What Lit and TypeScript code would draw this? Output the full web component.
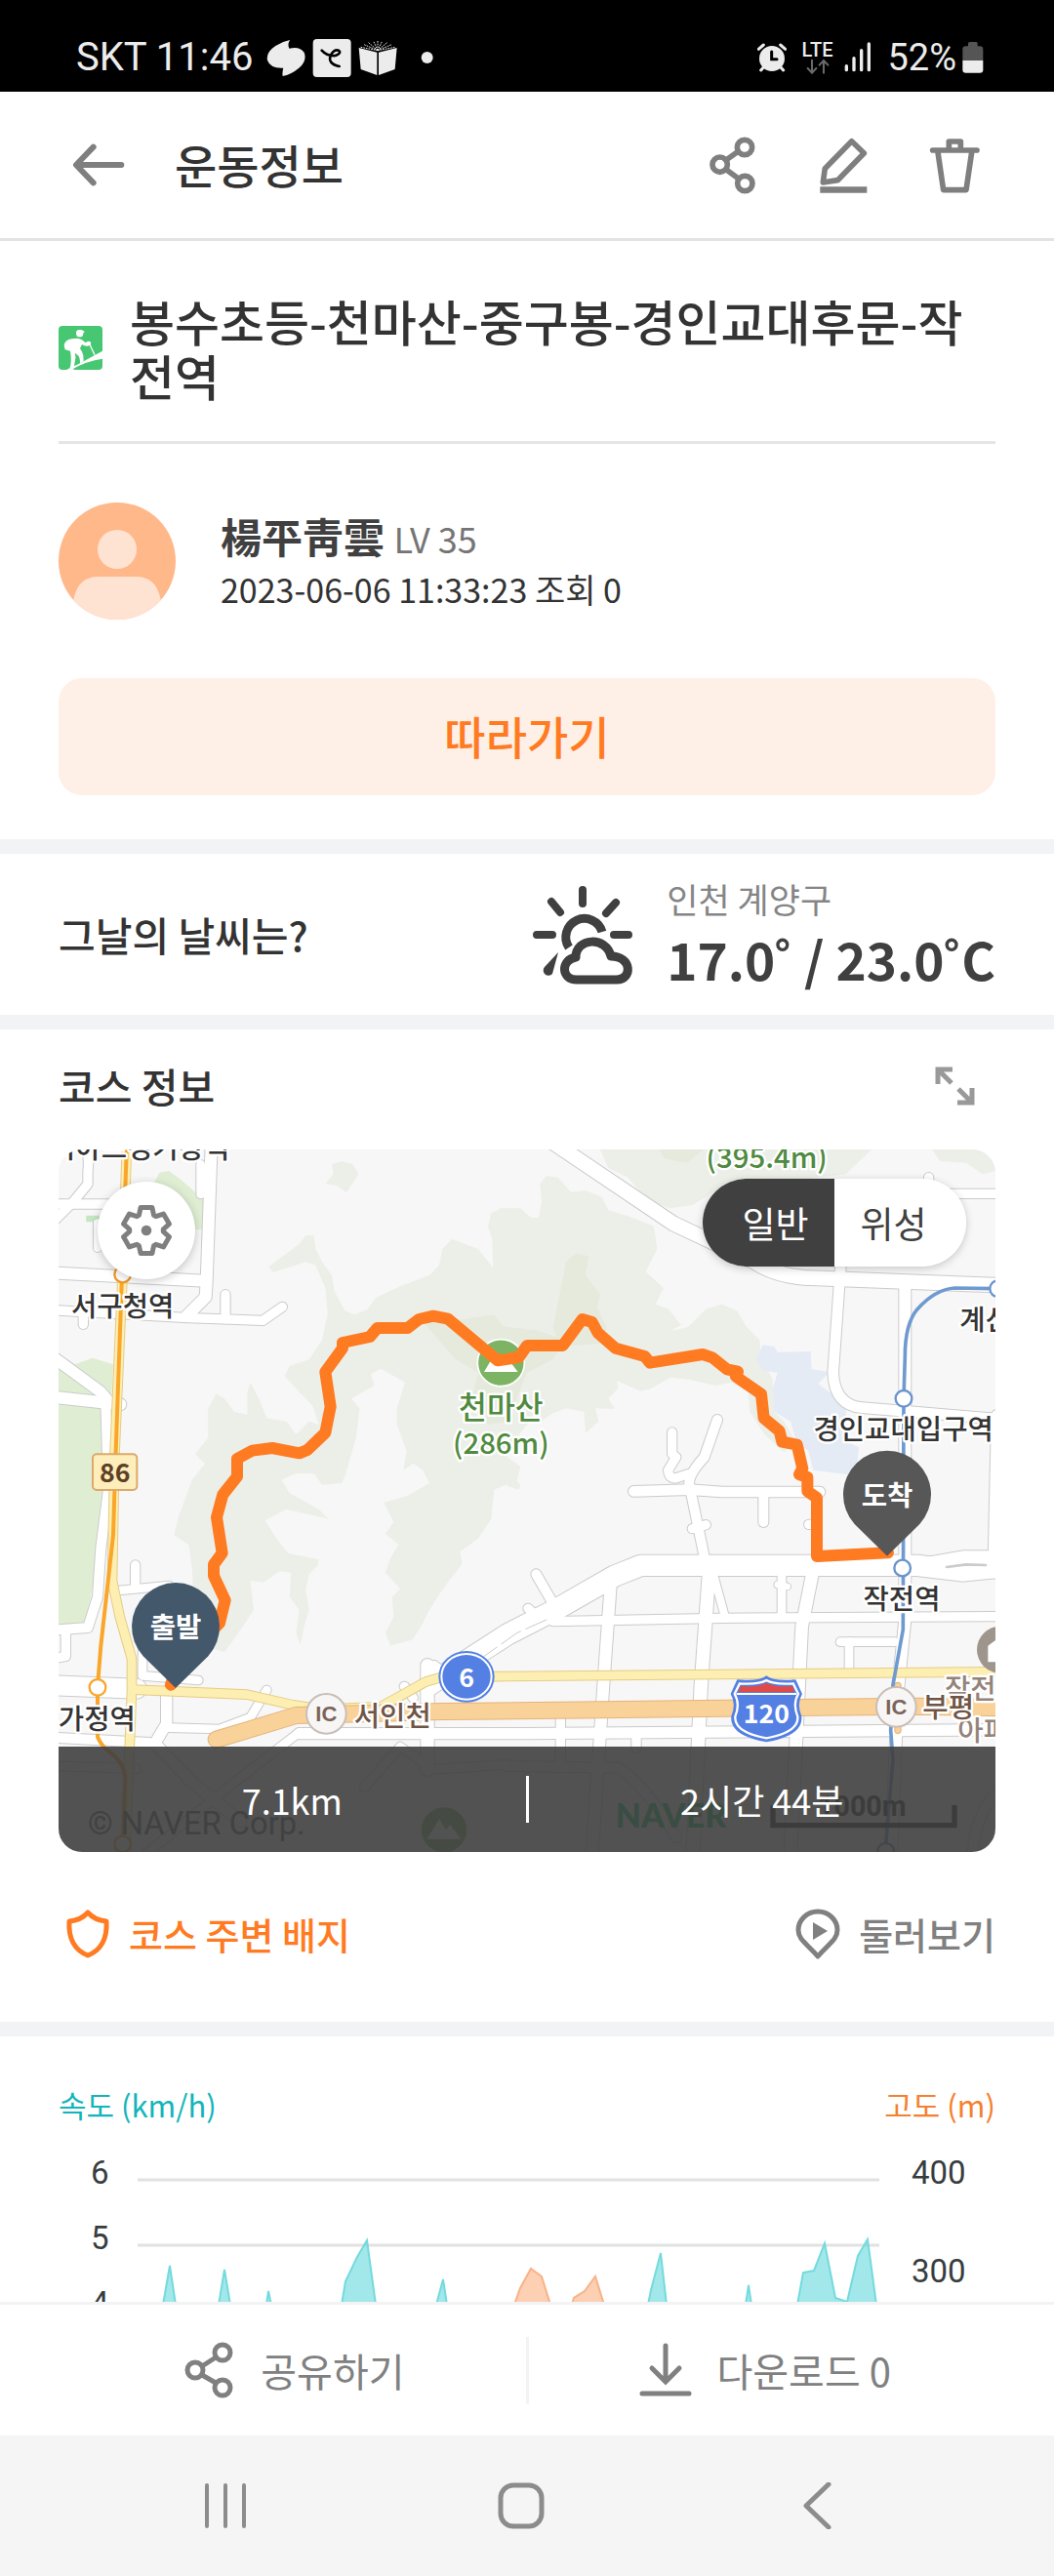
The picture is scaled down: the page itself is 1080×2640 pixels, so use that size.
import { LitElement, html, svg, css } from "lit";
import { customElement, property, state } from "lit/decorators.js";
import { classMap } from "lit/directives/class-map.js";

/* ---------- shared icon drawings ---------- */

const gearPath = (() => {
  const pts: string[] = [];
  const at = (deg: number, r: number) => {
    const a = ((deg - 90) * Math.PI) / 180;
    pts.push(`${(r * Math.cos(a)).toFixed(1)} ${(r * Math.sin(a)).toFixed(1)}`);
  };
  for (let k = 0; k < 6; k++) {
    const d = k * 60;
    at(d - 26, 52);
    at(d - 14, 73);
    at(d + 14, 73);
    at(d + 26, 52);
  }
  return `M${pts.join("L")}Z`;
})();

const icons: Record<string, { box: string; body: unknown }> = {
  back: {
    box: "34 357 180 180",
    body: svg`<g fill="none" stroke="#7f7f7f" stroke-width="18" stroke-linecap="round" stroke-linejoin="round"><path d="M194 447H56M108 392L55 447L108 502"/></g>`,
  },
  share: {
    box: "63 357 171 180",
    body: svg`<g fill="none" stroke="#7f7f7f" stroke-width="17"><circle cx="186" cy="393" r="23"/><circle cx="110" cy="446" r="23"/><circle cx="187" cy="504" r="23"/><path d="M129 432L167 405M129 461L168 490"/></g>`,
  },
  edit: {
    box: "407 357 171 180",
    body: svg`<path d="M517 374L555 411L474 494L429 501L435 458Z" fill="none" stroke="#7f7f7f" stroke-width="17" stroke-linejoin="round"/><path d="M420 514h144v19h-144z" fill="#7f7f7f"/>`,
  },
  trash: {
    box: "749 357 171 180",
    body: svg`<g fill="none" stroke="#7f7f7f" stroke-width="17" stroke-linecap="round" stroke-linejoin="round"><path d="M766 402H902M816 398V375H852V398M782 408L799 524H869L886 408"/></g>`,
  },
  weather: {
    box: "545 906 104 104",
    body: svg`<g fill="none" stroke="#404040" stroke-linecap="round" stroke-linejoin="round"><path stroke-width="8" d="M597 912V926M565 924L574 935M631 925L621 936M550 958H566M629 958H644"/><path stroke-width="9" stroke-linecap="butt" d="M583 971A19 19 0 1 1 617 955"/><path stroke-width="9" d="M591 1004C575 1004 574 984 590 981C590 961 621 959 626 980C648 980 648 1004 632 1004Z"/></g><path fill="#404040" d="M572 976L558 991A5 5 0 0 0 566 998Z"/>`,
  },
  expand: {
    box: "957 1090 44 44",
    body: svg`<g fill="none" stroke="#999" stroke-width="5"><path d="M961 1110V1095H976M962 1096L975 1109M996 1114V1129H981M995 1128L982 1115"/></g>`,
  },
  gear: {
    box: "-81 -81 162 162",
    body: svg`<path d="${gearPath}" fill="none" stroke="#7f7f7f" stroke-width="15" stroke-linejoin="round"/><circle r="16" fill="#7f7f7f"/>`,
  },
  shield: {
    box: "66 1955 48 54",
    body: svg`<path d="M90 1960Q97 1968 109 1969C110 1986 105 1998 90 2004C75 1998 70 1986 71 1969Q83 1968 90 1960Z" fill="none" stroke="#ff7b22" stroke-width="5" stroke-linejoin="round"/>`,
  },
  place: {
    box: "815 1955 48 54",
    body: svg`<path d="M839 2005C828 1992 819 1988 819 1978A20 19 0 0 1 859 1978C859 1988 850 1992 839 2005Z" fill="none" stroke="#808080" stroke-width="5" stroke-linejoin="round"/><path d="M834 1970L849 1979L834 1988Z" fill="#808080"/>`,
  },
  shareThin: {
    box: "188 2399 54 60",
    body: svg`<g fill="none" stroke="#808080" stroke-width="5"><circle cx="229" cy="2411" r="8"/><circle cx="201" cy="2429" r="8"/><circle cx="229" cy="2447" r="8"/><path d="M208 2425L222 2416M208 2434L222 2442"/></g>`,
  },
  download: {
    box: "655 2400 54 60",
    body: svg`<g fill="none" stroke="#808080" stroke-width="5" stroke-linecap="round"><path d="M682 2405V2441M668 2428L682 2442L696 2428M658 2454H706"/></g>`,
  },
  recents: {
    box: "208 2543 48 48",
    body: svg`<path d="M213 2546V2588M232 2546V2588M251 2546V2588" stroke="#8c8c8c" stroke-width="4" stroke-linecap="round"/>`,
  },
  home: {
    box: "510 2543 48 48",
    body: svg`<rect x="513" y="2546" width="42" height="42" rx="13" fill="none" stroke="#8c8c8c" stroke-width="5"/>`,
  },
  prev: {
    box: "813 2543 48 48",
    body: svg`<path d="M849 2545L826 2567L849 2589" fill="none" stroke="#8c8c8c" stroke-width="5" stroke-linecap="round" stroke-linejoin="round"/>`,
  },
  hiking: {
    box: "0 945 135 135",
    body: svg`<rect y="945" width="135" height="135" rx="12" fill="#47c771"/><g fill="#fff"><circle cx="65" cy="968" r="11"/><path d="M53 962Q66 952 80 962L78 966Z"/><path d="M17 1006Q19 988 40 985Q62 980 72 988L82 996L92 992Q101 992 99 1001L94 1006Q82 1009 72 1002L66 1014Q74 1026 76 1036L77 1054L66 1060Q66 1042 60 1036L50 1028Q54 1040 51 1050L46 1080H33Q42 1056 36 1022L20 1018Z"/><path d="M24 1080L66 1060L135 1022V1046Q88 1052 38 1080Z"/></g><path d="M94 998L111 1034" stroke="#fff" stroke-width="4"/>`,
  },
  avatar: {
    box: "0 0 120 120",
    body: svg`<clipPath id="c"><circle cx="60" cy="60" r="60"/></clipPath><g clip-path="url(#c)"><rect width="120" height="120" fill="#ffb88a"/><circle cx="60" cy="48" r="20" fill="#ffe3d2"/><path d="M14 140V110Q16 76 40 76H80Q104 76 106 110V140Z" fill="#ffe3d2"/></g>`,
  },
  notices: {
    box: "640 60 519 120",
    body: svg`<path fill="#ececec" d="M712 66Q704 80 710 92Q742 84 756 104Q766 130 740 152Q716 172 690 177Q688 164 692 152Q652 154 643 128Q638 104 668 84Q690 70 712 66Z"/><rect x="783" y="63" width="117" height="117" rx="12" fill="#ececec"/><path d="M810 98Q826 116 852 114Q872 106 862 98Q848 94 838 112Q826 138 864 147" fill="none" stroke="#000" stroke-width="8" stroke-linecap="round"/><g fill="#ececec"><path d="M924 90L980 104V174L930 156ZM1041 90L985 104V174L1035 156Z"/></g><path d="M982 98L930 88M982 98L940 80M982 98L954 74M982 98L969 69M982 98V66M982 98L996 69M982 98L1011 74M982 98L1025 80M982 98L1036 88" stroke="#ececec" stroke-width="3" stroke-dasharray="5 3"/><circle cx="1134" cy="120" r="18" fill="#ececec"/>`,
  },
  alarm: {
    box: "224 72 90 96",
    body: svg`<circle cx="269" cy="123" r="39" fill="#ececec"/><path d="M228 94L243 81M310 94L295 81M243 150L235 159M296 150L304 159" stroke="#ececec" stroke-width="9" stroke-linecap="round"/><path d="M268 102V125H284" fill="none" stroke="#000" stroke-width="9" stroke-linecap="round"/>`,
  },
  traffic: {
    box: "372 122 78 48",
    body: svg`<path d="M393 127V164M380 152L393 166L406 152M429 166V130M416 142L429 128L442 142" fill="none" stroke="#6a6a6a" stroke-width="6" stroke-linecap="round"/>`,
  },
  signal: {
    box: "497 72 84 96",
    body: svg`<path d="M504 146V158M527 122V158M550 98V158M573 78V158" stroke="#ececec" stroke-width="10" stroke-linecap="round"/>`,
  },
  battery: {
    box: "857 69 66 96",
    body: svg`<path d="M858 126V92Q858 82 868 82H875V74Q875 69 880 69H900Q904 69 904 74V82H911Q921 82 921 92V126Z" fill="#555"/><path d="M858 126H921V155Q921 164 911 164H868Q858 164 858 155Z" fill="#ececec"/>`,
  },
};

@customElement("app-icon")
export class AppIcon extends LitElement {
  @property() name = "";

  static styles = css`
    :host {
      display: block;
      flex: none;
    }
    svg {
      display: block;
      width: 100%;
      height: 100%;
    }
  `;

  render() {
    const icon = icons[this.name];
    return html`<svg viewBox=${icon.box} aria-hidden="true">${icon.body}</svg>`;
  }
}

/* ---------- map ---------- */

interface Street {
  d: string;
  w: number;
}

const streets: Street[] = [
  { d: "M40 222H240", w: 28 },
  { d: "M145 40Q155 90 150 120V160L105 215L50 270", w: 28 },
  { d: "M530 40L515 460L512 508L455 565", w: 36 },
  { d: "M497 100V192", w: 26 },
  { d: "M180 280V357", w: 24 },
  { d: "M40 433L510 458", w: 36 },
  { d: "M40 548L460 572L688 580L748 538", w: 28 },
  { d: "M573 500V575", w: 28 },
  { d: "M136 560V592", w: 28 },
  { d: "M40 690L190 800L215 830", w: 34 },
  { d: "M40 815L250 838", w: 36 },
  { d: "M205 830L213 1100L190 1280L180 1430L150 1524L40 1532", w: 30 },
  { d: "M245 1410L400 1395", w: 26 },
  { d: "M296 1332V1400", w: 28 },
  { d: "M82 1530V1612L40 1620", w: 28 },
  { d: "M40 1702L300 1712", w: 60 },
  { d: "M318 1600V1672L490 1686", w: 26 },
  { d: "M392 1720V1820L356 1880L470 2000L620 2120", w: 34 },
  { d: "M40 1862L340 1878", w: 30 },
  { d: "M400 1832L555 1836L650 1800L700 1716", w: 26 },
  { d: "M330 2220L600 2000L800 1846H1230", w: 26 },
  { d: "M70 1950L300 1958", w: 26 },
  { d: "M1000 2015L1110 1890L1210 1960L1440 1945", w: 26 },
  { d: "M1194 1640V1960", w: 40 },
  { d: "M1123 1705L1150 1740", w: 28 },
  { d: "M1215 1640L1240 1660", w: 28 },
  { d: "M1200 1700L1440 1545L1590 1468L1770 1365L1850 1333H2700L2840 1350L2940 1340", w: 64 },
  { d: "M2700 1330L2840 1305H2950", w: 34 },
  { d: "M1503 1465L1520 1480", w: 28 },
  { d: "M1528 1360L1580 1450", w: 30 },
  { d: "M1580 1505L2100 1495L2950 1490", w: 28 },
  { d: "M1758 1380L1735 1700L1700 2220", w: 36 },
  { d: "M2060 1350L2035 1700L2010 2220", w: 40 },
  { d: "M2380 1345L2345 1520L2310 2220", w: 38 },
  { d: "M2283 1360V1490", w: 26 },
  { d: "M2073 1360L2110 1496", w: 24 },
  { d: "M2270 1392L2300 1398", w: 20 },
  { d: "M2463 1568H2630", w: 26 },
  { d: "M2490 1568V1660", w: 26 },
  { d: "M800 1850H1500L2950 1838", w: 34 },
  { d: "M1603 1800V1940", w: 28 },
  { d: "M1836 1850V1895", w: 28 },
  { d: "M1440 1950L1780 1955Q1850 1990 1960 2170", w: 30 },
  { d: "M2870 2220Q2880 2080 2960 2020", w: 30 },
  { d: "M2662 470V1500L2640 1720L2620 2220", w: 36 },
  { d: "M1570 26L1950 282L2200 400Q2260 440 2350 448L2960 472", w: 44 },
  { d: "M2465 400L2441 740Q2445 840 2530 848L2960 884", w: 32 },
  { d: "M2735 140V190H2960", w: 28 },
  { d: "M2942 870L2932 1320", w: 28 },
  { d: "M1946 924V990L1958 1000L1934 1040Q1936 1068 1960 1064L1996 1052", w: 28 },
  { d: "M2085 885L2045 1000Q1990 1060 2000 1090L2050 1330", w: 30 },
  { d: "M1828 1105L2000 1100L2100 1107L2400 1107", w: 32 },
  { d: "M2227 1110V1200", w: 30 },
  { d: "M2008 1220L2050 1208", w: 28 },
  { d: "M2366 1207H2380", w: 28 },
];

const route =
  "M405 1700L420 1650L555 1510L572 1440L537 1365V1330L563 1295L546 1185L565 1115L609 1060V1005L655 980L717 972L800 988L825 978L880 925L896 845L880 738L933 665V648L1017 630L1040 603H1133L1168 576L1212 566L1257 575L1410 703L1475 693L1500 657H1610L1670 576L1700 585L1718 618L1772 665L1862 690L1878 710L2040 684L2070 694L2115 730L2148 737L2142 752L2220 806L2228 880L2276 920L2284 953L2330 962L2347 1035L2337 1053L2362 1062V1105L2391 1125V1305L2610 1294";

const woods = [
  "M880 160L905 130L900 100L930 90L965 100L982 130L945 187L915 165Z",
  "M705 415L800 345L820 318L845 318L850 360L870 400L900 440L908 490L940 550L970 562L1010 545L1035 510L1110 475L1200 440L1230 410L1240 360L1270 330L1310 345L1350 360L1396 418L1393 330L1380 290L1390 250L1420 235H1480L1510 262L1535 265L1545 215L1540 160L1560 135L1595 140L1635 185L1680 180L1730 200L1750 240L1815 260L1890 290L1900 360L1865 430L1920 480L1895 530L1935 545L1975 595L1940 612L1995 600L2050 545L2100 530L2145 550L2175 600L2215 640L2220 700L2255 760L2260 860L2290 890L2325 950L2290 985L2230 930L2185 860L2180 800L2130 770L2080 780L2000 762L1940 755L1880 790L1850 797L1776 765L1780 790L1750 820L1770 852L1710 850L1720 890L1680 926L1675 860L1620 850L1580 865L1550 885L1500 900L1460 950L1440 1000L1480 1030L1470 1070L1400 1100L1395 1140L1390 1190L1350 1250L1295 1290L1300 1330L1260 1380L1225 1430L1200 1470L1180 1510L1150 1560L1080 1580L1065 1540L1090 1490L1085 1430L1110 1405L1065 1355L1080 1310L1105 1270L1065 1235L1090 1200L1060 1140L1130 1120L1200 1080L1180 1040L1150 1020L1120 1040L1130 980L1100 900V850L1125 770L1080 745L1050 728L1020 745L1030 780L960 820L985 850L975 940L940 1060L930 1080L870 1085L845 1050H790L745 1070L770 1110L860 1160L890 1190L760 1160L695 1195L730 1250L765 1295L860 1315L855 1335L830 1360L820 1410L830 1470L815 1520L803 1578L790 1540L800 1470L770 1430L775 1355L740 1350L690 1385L650 1380L660 1470L620 1530L570 1600L540 1590L480 1540L470 1340L460 1270L415 1240L430 1180L445 1140L470 1070L510 1020L480 990L520 940V850L545 805L570 820L600 860L640 870V800L650 770L680 830L700 880L760 890L790 930L830 890L860 900L840 840L800 800L755 750L770 720L830 700L870 640L887 560L880 480L850 410L820 400L720 432Z",
  "M1725 54L1750 110L1810 140L1870 210L1940 235L2010 225L2080 180L2480 130L2560 54Z",
  "M2745 54L2770 90L2850 95L2900 130L2940 120V54Z",
  "M1440 1040L1480 1085L1475 1100L1440 1090Z",
];

const groves = [
  "M1620 400L1650 374L1690 382L1680 440L1725 500L1715 540L1745 600L1740 650L1600 660L1580 600L1600 500Z",
  "M1160 560L1280 580L1400 562L1425 598L1530 610L1620 640L1580 700L1500 740L1440 890L1380 900L1330 820L1350 740L1280 700Z",
  "M1905 54L1920 80L1990 96L2045 54Z",
];

const station = (x: number, y: number, color: string) =>
  svg`<circle cx=${x} cy=${y} r="25" fill="#fff" stroke=${color} stroke-width="7"/>`;

const peak = (x: number, y: number) =>
  svg`<circle cx=${x} cy=${y} r="72" fill="#7cb464" stroke="#fff" stroke-width="5"/><path d="M${x - 52} ${y + 28}L${x - 15} ${y - 34}L${x + 6} ${y}L${x + 18} ${y - 16}L${x + 52} ${y + 28}Z" fill="#fff"/>`;

const interchange = (x: number, y: number) =>
  svg`<circle cx=${x} cy=${y} r="61" fill="#f8f6f5" stroke="#c9beb8" stroke-width="6"/><text class="ic" x=${x} y=${y + 24}>IC</text>`;

const pin = (x: number, y: number, color: string, label: string) =>
  svg`<path d="M${x} ${y + 188}L${x - 100} ${y + 90}A135 135 0 1 1 ${x + 100} ${y + 90}Z" fill=${color}/><text class="pin" x=${x} y=${y + 32}>${label}</text>`;

@customElement("course-map")
export class CourseMap extends LitElement {
  @state() private mode = "일반";

  static styles = css`
    :host {
      display: block;
      position: relative;
      aspect-ratio: 4 / 3;
      overflow: hidden;
      border-radius: 24px;
      background: #f7f7f7;
    }
    .canvas {
      display: block;
      width: 100%;
      height: 100%;
    }
    text {
      font-family: "Noto Sans CJK KR", sans-serif;
      font-weight: 500;
      font-size: 86px;
      text-anchor: middle;
    }
    .place {
      fill: #333;
      stroke: #fff;
      stroke-width: 14px;
      stroke-linejoin: round;
      paint-order: stroke;
    }
    .road {
      fill: #6f5546;
    }
    .poi {
      fill: #94837a;
    }
    .peak {
      fill: #4f8a3e;
      font-size: 94px;
    }
    .height {
      font-size: 88px;
    }
    .start {
      text-anchor: start;
    }
    .ic {
      fill: #7a655a;
      font-family: "Liberation Sans", sans-serif;
      font-weight: 700;
      font-size: 66px;
    }
    .pin {
      fill: #fff;
      font-weight: 700;
    }
    .badge {
      font-weight: 700;
      font-size: 80px;
      fill: #fff;
    }
    .brown {
      fill: #5d4025;
    }
    .credit {
      font-family: Roboto, sans-serif;
      font-weight: 400;
      font-size: 98px;
      fill: #555;
      text-anchor: start;
    }
    .brand {
      font-family: Lato, sans-serif;
      font-weight: 900;
      font-size: 102px;
      fill: #03c75a;
      text-anchor: start;
    }
    .scale {
      font-family: Roboto, sans-serif;
      font-weight: 700;
      fill: #222;
    }
    .settings {
      position: absolute;
      left: 40px;
      top: 33px;
      width: 100px;
      height: 100px;
      padding: 0;
      border: 0;
      border-radius: 50%;
      background: #fff;
      box-shadow: 0 2px 10px rgba(0, 0, 0, 0.22);
      display: grid;
      place-items: center;
    }
    .settings app-icon {
      width: 54px;
      height: 54px;
    }
    .modes {
      position: absolute;
      right: 30px;
      top: 30px;
      display: flex;
      width: 270px;
      height: 90px;
      border-radius: 45px;
      overflow: hidden;
      background: #fff;
      box-shadow: 0 2px 8px rgba(0, 0, 0, 0.2);
    }
    .mode {
      flex: 1 1 50%;
      box-sizing: border-box;
      border: 0;
      padding: 0 14px 0 0;
      background: #fff;
      color: #404040;
      font: 400 37px/54px "Noto Sans CJK KR", sans-serif;
    }
    .mode.on {
      padding: 0 0 0 14px;
      background: #404040;
      color: #fff;
    }
    .stats {
      position: absolute;
      inset: auto 0 0 0;
      display: flex;
      align-items: center;
      height: 108px;
      background: rgba(63, 63, 63, 0.9);
      color: #fff;
      font: 400 36px/54px "Noto Sans CJK KR", sans-serif;
    }
    .stat {
      flex: 1;
      text-align: center;
    }
    .rule {
      width: 3px;
      height: 48px;
      background: #fff;
    }
  `;

  render() {
    return html`
      <svg class="canvas" viewBox="60 54 2880 2160" preserveAspectRatio="xMidYMid slice" role="img" aria-label="코스 지도">
        <rect x="60" y="54" width="2880" height="2160" fill="#f7f7f7" />
        ${woods.map((d) => svg`<path d=${d} fill="#ecefe8"/>`)}
        ${groves.map((d) => svg`<path d=${d} fill="#e6eadd"/>`)}
        <g fill="#dfeed3">
          <path d="M60 830L190 850L203 1000L200 1140L180 1290L165 1400L140 1512H60Z" />
          <path d="M60 680L110 715L165 695L228 715L222 822L60 800Z" />
          <path d="M355 155L370 125L400 120L440 150L480 185L505 200V300H440Z" />
        </g>
        <path d="M145 257h45v20h-45z" fill="#c3e8c0" />
        <path
          d="M2225 655L2260 660L2270 677L2372 675L2375 730L2430 738L2395 775L2430 800L2470 810L2480 850V950L2520 970L2515 1020L2500 1055L2380 1040L2365 980L2330 960L2310 890L2260 860L2255 790L2270 740L2225 735L2205 700Z"
          fill="#e4ebf5"
        />
        <g fill="none" stroke-linecap="round" stroke-linejoin="round">
          ${streets.map((s) => svg`<path d=${s.d} stroke="#cbcbcb" stroke-width=${s.w + 6}/>`)}
          ${streets.map((s) => svg`<path d=${s.d} stroke="#fff" stroke-width=${s.w}/>`)}
          <path d="M1350 1625L1470 1540L1560 1500" stroke="#cbcbcb" stroke-width="3" stroke-dasharray="70 18" />
          <path d="M2790 1338L2850 1330L2910 1332" stroke="#cbcbcb" stroke-width="8" />
          <g stroke="#e6cb86" stroke-width="32">
            <path d="M270 40L255 480L232 1000L225 1380L248 1490L285 1620V1720L265 2230" />
            <path d="M290 1715L640 1730L780 1762L870 1775L1050 1768L1190 1690L1240 1676L1440 1674L2950 1660" />
          </g>
          <g stroke="#fdefb2" stroke-width="26">
            <path d="M270 40L255 480L232 1000L225 1380L248 1490L285 1620V1720L265 2230" />
            <path d="M290 1715L640 1730L780 1762L870 1775L1050 1768L1190 1690L1240 1676L1440 1674L2950 1660" />
          </g>
          <path d="M2640 1702V1840" stroke="#e5b27a" stroke-width="22" />
          <path d="M2640 1702V1840" stroke="#f9d29a" stroke-width="16" />
          <path d="M545 1868L790 1794L1240 1782L2700 1766L2950 1770" stroke="#e5b27a" stroke-width="54" />
          <path d="M545 1868L790 1794L1240 1782L2700 1766L2950 1770" stroke="#f9d29a" stroke-width="48" />
          <path
            d="M270 40L255 440L235 1010L228 1240L190 1580L180 1705V1860Q190 1885 210 1900Q265 1940 265 1990L258 2180"
            stroke="#f9a62b"
            stroke-width="12"
          />
          <path
            d="M2950 482L2815 480Q2755 484 2700 545Q2662 590 2662 690L2658 820L2656 1530L2625 1700L2618 1840L2625 1930L2603 2190"
            stroke="#6f9ad0"
            stroke-width="11"
          />
        </g>
        ${station(257, 438, "#f09a2a")} ${station(180, 1708, "#f9a62b")} ${station(257, 2190, "#f9a62b")}
        ${station(2948, 482, "#6a93cc")} ${station(2658, 820, "#6a93cc")} ${station(2654, 1341, "#6a93cc")}
        ${station(2603, 2212, "#6a93cc")} ${peak(1420, 710)} ${peak(1245, 2146)}
        <circle cx="2955" cy="1592" r="72" fill="#9e958c" />
        <path d="M2917 1630V1580L2955 1552V1630Z" fill="#fff" />

        <text class="place" x="270" y="82">아시아드경기장역</text>
        <text class="place" x="257" y="568">서구청역</text>
        <text class="place" x="178" y="1836">가정역</text>
        <text class="place start" x="2830" y="608">계산</text>
        <text class="place" x="2657" y="946">경인교대입구역</text>
        <text class="place" x="2652" y="1468">작전역</text>
        <text class="place peak" x="1420" y="882">천마산</text>
        <text class="place peak height" x="1420" y="991">(286m)</text>
        <text class="place peak height" x="2237" y="110">(395.4m)</text>
        <text class="place poi start" x="2784" y="1742">작전</text>
        <text class="place poi start" x="2824" y="1872">아파트</text>
        <text class="place road start" x="968" y="1826">서인천</text>
        <text class="place road start" x="2716" y="1801">부평</text>
        ${interchange(883, 1789)} ${interchange(2635, 1768)}

        <rect x="165" y="991" width="136" height="110" rx="12" fill="#fdeebb" stroke="#dcaa6c" stroke-width="6" />
        <text class="badge brown" x="233" y="1076">86</text>
        <ellipse cx="1314" cy="1675" rx="86" ry="79" fill="#5480e4" />
        <ellipse cx="1314" cy="1675" rx="77" ry="70" fill="none" stroke="#fff" stroke-width="6" />
        <text class="badge" x="1314" y="1706">6</text>
        <path
          d="M2236 1672Q2258 1690 2326 1684L2346 1728Q2328 1758 2344 1796Q2350 1856 2236 1876Q2122 1856 2128 1796Q2144 1758 2126 1728L2146 1684Q2214 1690 2236 1672Z"
          fill="#5480e4"
        />
        <path
          d="M2236 1686Q2260 1700 2318 1696L2334 1728Q2316 1758 2332 1798Q2336 1846 2236 1864Q2136 1846 2140 1798Q2156 1758 2138 1728L2154 1696Q2212 1700 2236 1686Z"
          fill="none"
          stroke="#fff"
          stroke-width="7"
        />
        <path d="M2156 1704Q2210 1708 2236 1694Q2262 1708 2316 1704L2322 1722H2150Z" fill="#df4a4a" />
        <path d="M2144 1728H2328" stroke="#fff" stroke-width="6" />
        <text class="badge" x="2236" y="1817">120</text>

        <path d=${route} fill="none" stroke="#ff7b22" stroke-width="36" stroke-linejoin="round" stroke-linecap="round" />
        ${pin(420, 1522, "#44586b", "출발")} ${pin(2607, 1116, "#575757", "도착")}

        <text class="credit" x="150" y="2159">© NAVER Corp.</text>
        <text class="brand" x="1772" y="2140">NAVER</text>
        <text class="scale" x="2530" y="2102">1000m</text>
        <path d="M2256 2070V2132H2814V2070" fill="none" stroke="#222" stroke-width="16" />
      </svg>
      <button class="settings" aria-label="지도 설정"><app-icon name="gear"></app-icon></button>
      <div class="modes">
        ${["일반", "위성"].map(
          (m) => html`<button
            class=${classMap({ mode: true, on: m === this.mode })}
            aria-pressed=${m === this.mode}
            @click=${() => (this.mode = m)}
          >
            ${m}
          </button>`,
        )}
      </div>
      <div class="stats">
        <span class="stat">7.1km</span><span class="rule"></span><span class="stat">2시간 44분</span>
      </div>
    `;
  }
}

/* ---------- speed and altitude chart ---------- */

const speedPeaks = [
  "26,180 33,140 39,180",
  "83,180 89,144 95,180",
  "132,180 134,166 137,180",
  "209,180 213,156 225,131 235,114 244,180",
  "306,180 313,154 317,180",
  "523,180 526,165 536,127 542,180",
  "623,180 626,160 629,180",
  "676,180 682,147 693,145 704,117 715,173 727,177 738,130 748,113 757,180",
];
const altitudePeaks = ["386,180 392,163 403,143 414,151 423,180", "445,180 447,173 458,166 469,151 478,180"];

@customElement("course-chart")
export class CourseChart extends LitElement {
  static styles = css`
    :host {
      display: block;
      padding: 46px 60px 0;
      font-family: "Noto Sans CJK KR", sans-serif;
    }
    .legend {
      display: flex;
      justify-content: space-between;
      font-size: 31px;
      line-height: 48px;
    }
    .speed {
      color: #12b5bb;
    }
    .altitude {
      color: #f5802f;
    }
    .body {
      display: grid;
      grid-template-columns: 81px 1fr 119px;
      align-items: start;
      padding-top: 1px;
    }
    .axis {
      display: flex;
      flex-direction: column;
      padding-top: 25px;
      font: 400 33px/40px Roboto, sans-serif;
      color: #373d3f;
    }
    .left {
      gap: 27px;
      padding-left: 33px;
    }
    .right {
      gap: 61px;
      padding-left: 33px;
    }
    .plot {
      display: block;
      width: 100%;
      height: 180px;
      margin-bottom: 40px;
    }
  `;

  render() {
    return html`
      <div class="legend"><span class="speed">속도 (km/h)</span><span class="altitude">고도 (m)</span></div>
      <div class="body">
        <div class="axis left">${[6, 5, 4].map((v) => html`<span>${v}</span>`)}</div>
        <svg class="plot" viewBox="0 0 760 180" preserveAspectRatio="none" role="img" aria-label="속도와 고도">
          <path d="M0 52H760M0 119H760" stroke="#e2e2e2" stroke-width="3" />
          <g fill="#fdcfb3" stroke="#f9b286" stroke-width="2">
            ${altitudePeaks.map((p) => svg`<polyline points=${p}/>`)}
          </g>
          <g fill="rgba(69,209,214,0.5)" stroke="#74dadd" stroke-width="2">
            ${speedPeaks.map((p) => svg`<polyline points=${p}/>`)}
          </g>
        </svg>
        <div class="axis right">${[400, 300].map((v) => html`<span>${v}</span>`)}</div>
      </div>
    `;
  }
}

/* ---------- page ---------- */

@customElement("app-root")
export class AppRoot extends LitElement {
  static styles = css`
    :host {
      display: flex;
      flex-direction: column;
      height: 100vh;
      background: #fff;
      color: #333;
      font-family: "Noto Sans CJK KR", sans-serif;
    }
    button {
      border: 0;
      padding: 0;
      background: none;
      color: inherit;
      font: inherit;
    }
    h1,
    h2,
    p {
      margin: 0;
      font-weight: 500;
    }
    .status {
      display: flex;
      justify-content: space-between;
      flex: none;
      height: 70px;
      padding: 24px 72px 0 78px;
      background: #000;
      color: #ececec;
      font: 400 40px/70px Roboto, sans-serif;
    }
    .cluster {
      display: flex;
      align-items: center;
    }
    .carrier {
      margin-right: 14px;
    }
    .notices {
      width: 173px;
      height: 40px;
    }
    .alarm {
      width: 30px;
      height: 32px;
      margin-right: 16px;
    }
    .network {
      display: grid;
      justify-items: center;
      margin-right: 12px;
      font-weight: 500;
      font-size: 20px;
      line-height: 18px;
    }
    .traffic {
      width: 26px;
      height: 16px;
    }
    .signal {
      width: 28px;
      height: 32px;
      margin-right: 16px;
    }
    .percent {
      font-size: 38px;
    }
    .battery {
      width: 22px;
      height: 32px;
      margin-left: 6px;
    }
    .appbar {
      display: flex;
      align-items: center;
      flex: none;
      height: 150px;
      padding: 0 45px 0 71px;
      border-bottom: 3px solid #e3e3e3;
    }
    .back app-icon {
      width: 60px;
      height: 60px;
    }
    .screen {
      flex: 1;
      margin-left: 48px;
      padding-bottom: 2px;
      font: 500 47px/64px "Noto Sans CJK KR", sans-serif;
    }
    .action {
      display: grid;
      place-items: center;
      width: 114px;
      height: 114px;
    }
    .action app-icon {
      width: 57px;
      height: 60px;
    }
    main {
      flex: 1;
      min-height: 0;
      overflow-y: auto;
      scrollbar-width: none;
    }
    section {
      padding: 0 60px;
    }
    .band {
      border-bottom: 15px solid #f1f3f5;
    }
    .heading {
      display: flex;
      align-items: center;
      gap: 28px;
      padding: 53px 0 40px;
      border-bottom: 3px solid #e5e5e5;
    }
    .heading app-icon {
      width: 45px;
      height: 45px;
    }
    .title {
      flex: 1;
      font: 500 50px/56px "Noto Sans CJK KR", sans-serif;
      word-break: break-all;
    }
    .user {
      display: flex;
      align-items: center;
      gap: 46px;
      padding: 60px 0;
    }
    .user app-icon {
      width: 120px;
      height: 120px;
    }
    .name {
      font-size: 42px;
      line-height: 56px;
      color: #404040;
    }
    .name strong {
      font-weight: 700;
    }
    .level {
      font-size: 36px;
      font-weight: 400;
      color: #757575;
    }
    .meta {
      font-size: 34px;
      line-height: 50px;
      font-weight: 400;
    }
    .follow {
      display: block;
      width: 100%;
      height: 120px;
      margin-bottom: 45px;
      padding-bottom: 4px;
      border-radius: 24px;
      background: #fff0e7;
      color: #ff7b22;
      font-size: 46px;
      font-weight: 500;
    }
    .weather {
      display: flex;
      align-items: center;
      height: 165px;
    }
    .subtitle {
      flex: 1;
      padding-bottom: 2px;
      font-size: 41px;
      line-height: 56px;
    }
    .sky {
      width: 104px;
      height: 104px;
      margin-right: 34px;
    }
    .area {
      font-size: 35px;
      line-height: 48px;
      font-weight: 400;
      color: #858585;
    }
    .degrees {
      font-size: 53px;
      line-height: 74px;
      font-weight: 700;
      color: #404040;
    }
    .course {
      display: flex;
      align-items: center;
      height: 116px;
      padding-bottom: 7px;
    }
    .expand {
      margin-right: 19px;
    }
    .expand app-icon {
      width: 44px;
      height: 44px;
    }
    .links {
      display: flex;
      align-items: center;
      justify-content: space-between;
      height: 167px;
      padding-bottom: 7px;
    }
    .link {
      display: flex;
      align-items: center;
      gap: 18px;
      color: #808080;
      font-size: 38px;
      font-weight: 500;
      line-height: 54px;
      text-decoration: none;
    }
    .link app-icon {
      width: 48px;
      height: 54px;
    }
    .badges {
      padding-left: 6px;
      color: #ff7b22;
    }
    .toolbar {
      display: grid;
      grid-template-columns: 1fr 3px 1fr;
      align-items: center;
      flex: none;
      height: 134px;
      border-top: 3px solid #f1f3f5;
      color: #808080;
      font-size: 40px;
      line-height: 56px;
    }
    .tool {
      display: flex;
      align-items: center;
      gap: 26px;
      height: 100%;
    }
    .tool app-icon {
      width: 54px;
      height: 60px;
    }
    .share {
      justify-content: flex-end;
      padding-right: 124px;
    }
    .download {
      padding-left: 113px;
    }
    .split {
      height: 69px;
      background: #f1f3f5;
    }
    .system {
      display: grid;
      grid-template-columns: repeat(3, 1fr);
      flex: none;
      height: 144px;
      padding: 0 92px 0 80px;
      background: #f5f5f5;
    }
    .system button {
      display: grid;
      place-items: center;
    }
    .system app-icon {
      width: 48px;
      height: 48px;
    }
  `;

  render() {
    return html`
      <div class="status">
        <div class="cluster">
          <span class="carrier">SKT 11:46</span>
          <app-icon class="notices" name="notices"></app-icon>
        </div>
        <div class="cluster">
          <app-icon class="alarm" name="alarm"></app-icon>
          <span class="network">LTE<app-icon class="traffic" name="traffic"></app-icon></span>
          <app-icon class="signal" name="signal"></app-icon>
          <span class="percent">52%</span>
          <app-icon class="battery" name="battery"></app-icon>
        </div>
      </div>
      <header class="appbar">
        <button class="back" aria-label="뒤로"><app-icon name="back"></app-icon></button>
        <h1 class="screen">운동정보</h1>
        <button class="action" aria-label="공유"><app-icon name="share"></app-icon></button>
        <button class="action" aria-label="수정"><app-icon name="edit"></app-icon></button>
        <button class="action" aria-label="삭제"><app-icon name="trash"></app-icon></button>
      </header>
      <main>
        <section class="band">
          <div class="heading">
            <app-icon name="hiking"></app-icon>
            <h2 class="title">봉수초등-천마산-중구봉-경인교대후문-작전역</h2>
          </div>
          <div class="user">
            <app-icon name="avatar"></app-icon>
            <div>
              <p class="name"><strong>楊平靑雲</strong> <span class="level">LV 35</span></p>
              <p class="meta">2023-06-06 11:33:23 조회 0</p>
            </div>
          </div>
          <button class="follow">따라가기</button>
        </section>
        <section class="band">
          <div class="weather">
            <h2 class="subtitle">그날의 날씨는?</h2>
            <app-icon class="sky" name="weather"></app-icon>
            <div>
              <p class="area">인천 계양구</p>
              <p class="degrees">17.0˚ / 23.0˚C</p>
            </div>
          </div>
        </section>
        <section class="band">
          <div class="course">
            <h2 class="subtitle">코스 정보</h2>
            <button class="expand" aria-label="크게 보기"><app-icon name="expand"></app-icon></button>
          </div>
          <course-map></course-map>
          <div class="links">
            <a class="link badges" href="#badges"><app-icon name="shield"></app-icon>코스 주변 배지</a>
            <a class="link" href="#tour"><app-icon name="place"></app-icon>둘러보기</a>
          </div>
        </section>
        <course-chart></course-chart>
      </main>
      <div class="toolbar">
        <button class="tool share"><app-icon name="shareThin"></app-icon>공유하기</button>
        <span class="split"></span>
        <button class="tool download"><app-icon name="download"></app-icon>다운로드 0</button>
      </div>
      <nav class="system">
        <button aria-label="최근 앱"><app-icon name="recents"></app-icon></button>
        <button aria-label="홈"><app-icon name="home"></app-icon></button>
        <button aria-label="이전"><app-icon name="prev"></app-icon></button>
      </nav>
    `;
  }
}
